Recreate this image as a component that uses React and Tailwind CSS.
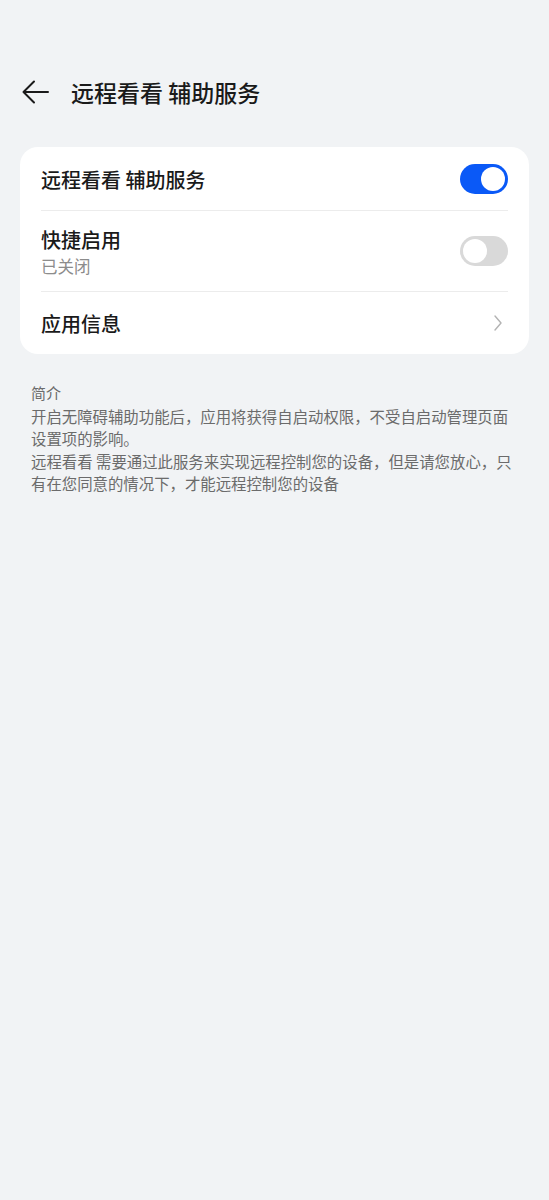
const Toggle = ({ on }) => (
  <div
    className={`flex h-[30px] w-[48px] shrink-0 items-center rounded-full p-[3px] ${
      on ? 'justify-end bg-[#0a59f7]' : 'justify-start bg-[#d9d9d9]'
    }`}
  >
    <div className="h-[24px] w-[24px] rounded-full bg-white" />
  </div>
)

const Chevron = () => (
  <svg width="8" height="16" viewBox="0 0 8 16" fill="none" className="shrink-0">
    <path d="M1 1l6 7-6 7" stroke="#b3b3b3" strokeWidth="1.4" strokeLinecap="round" strokeLinejoin="round" />
  </svg>
)

const App = () => {
  return (
    <div
      className="min-h-[1200px] w-full bg-[#f1f3f5] text-[#1a1a1a]"
      style={{ fontFamily: '"Noto Sans CJK SC", "Noto Sans", sans-serif' }}
    >
      {/* header */}
      <div className="flex h-[56px] items-center pl-[22px] pt-[64px] box-content">
        <svg width="27" height="24" viewBox="0 0 27 24" fill="none" className="shrink-0">
          <path d="M1.5 12H26M12 1.5L1.5 12 12 22.5" stroke="#1a1a1a" strokeWidth="2" strokeLinecap="round" strokeLinejoin="round" />
        </svg>
        <h1 className="ml-[22px] text-[23px] font-medium leading-none">远程看看 辅助服务</h1>
      </div>

      {/* settings card */}
      <div className="mx-[20px] mt-[27px] rounded-[18px] bg-white px-[21px]">
        <div className="flex h-[64px] items-center justify-between border-b border-[#ececec]">
          <span className="pt-[3px] text-[20px] font-medium">远程看看 辅助服务</span>
          <Toggle on />
        </div>
        <div className="flex h-[81px] items-center justify-between border-b border-[#ececec]">
          <div className="flex flex-col pt-[3px]">
            <span className="text-[20px] font-medium leading-[28px]">快捷启用</span>
            <span className="text-[16.5px] leading-[25px] text-[#8c8c8c]">已关闭</span>
          </div>
          <Toggle />
        </div>
        <div className="flex h-[62px] items-center justify-between pr-[6px]">
          <span className="pt-[2px] text-[20px] font-medium">应用信息</span>
          <Chevron />
        </div>
      </div>

      {/* description */}
      <div className="mt-[28px] px-[31px] text-[15.4px] leading-[22.5px] text-[#6b6b6b]">
        <p className="text-[15px]">简介</p>
        <p>开启无障碍辅助功能后，应用将获得自启动权限，不受自启动管理页面设置项的影响。</p>
        <p>远程看看 需要通过此服务来实现远程控制您的设备，但是请您放心，只有在您同意的情况下，才能远程控制您的设备</p>
      </div>
    </div>
  )
}

export default App
